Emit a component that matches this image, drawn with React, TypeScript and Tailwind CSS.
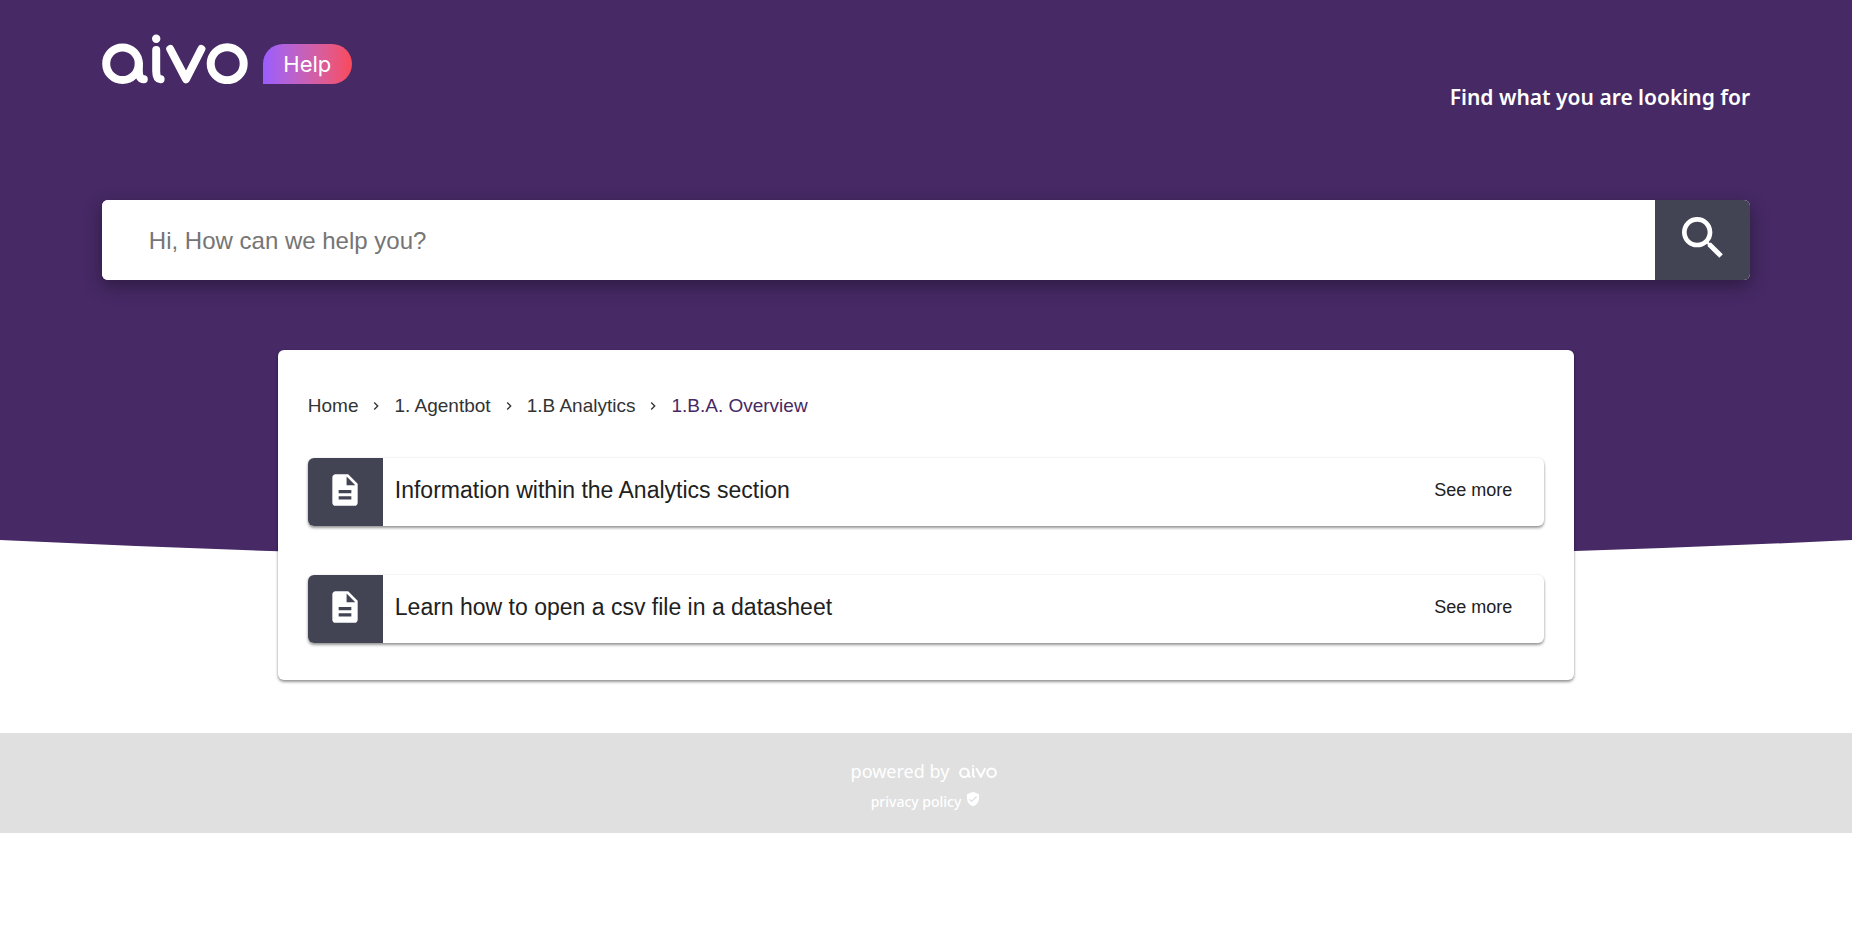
import { MdChevronRight, MdDescription, MdSearch, MdVerifiedUser } from "react-icons/md";

const crumbs = ["Home", "1. Agentbot", "1.B Analytics"];
const currentCrumb = "1.B.A. Overview";

const articles = [
  "Information within the Analytics section",
  "Learn how to open a csv file in a datasheet",
];

function AivoLogo({ className, stroke = 8 }: { className: string; stroke?: number }) {
  return (
    <svg
      viewBox="0 0 146 50"
      role="img"
      aria-label="aivo"
      className={className}
      fill="none"
      stroke="currentColor"
      strokeWidth={stroke}
      strokeLinecap="round"
      strokeLinejoin="round"
    >
      <circle cx="20.5" cy="29.7" r="16.3" />
      <path d="M36.8 29.7V36Q36.8 45 41.8 45.3" />
      <circle cx="54.2" cy="4.8" r="4.2" fill="currentColor" stroke="none" />
      <path d="M54.2 16V37Q54.2 45 58.6 45.3" />
      <path d="M68.2 15L84 45.2L99.4 15" />
      <circle cx="125.2" cy="29.7" r="16.5" />
    </svg>
  );
}

function ArticleRow({ title }: { title: string }) {
  return (
    <li>
      <a
        href="#"
        className="flex h-17 items-stretch overflow-hidden rounded-md bg-white shadow-[0_2px_3px_rgba(0,0,0,0.4),0_0_3px_rgba(0,0,0,0.08)]"
      >
        <span className="flex w-[75px] shrink-0 items-center justify-center bg-[#434453] pb-1 text-white">
          <MdDescription size={38} aria-hidden />
        </span>
        <span className="flex flex-1 items-center pb-1 pl-3 text-[23px] text-[#212121]">{title}</span>
        <span className="flex items-center pr-8 pb-1 text-[18px] text-[#212121]">See more</span>
      </a>
    </li>
  );
}

export default function App() {
  return (
    <div className="min-h-screen bg-white font-['Liberation_Sans',Arial,sans-serif]">
      <header className="h-[540px] bg-[#462965] px-[5.5%] pt-[34px] text-white">
        <div className="flex h-[166px] items-start justify-between">
          <a href="#" className="flex items-end gap-[15px]">
            <AivoLogo className="h-[50px] w-[146px]" />
            <span className="flex h-10 w-[89px] items-center justify-center rounded-[20px] rounded-bl-none bg-linear-to-r from-[#9b5cff] to-[#fa485a] font-[Inter,sans-serif] text-[22px]">
              Help
            </span>
          </a>
          <h1 className="pt-12 font-['Noto_Sans',sans-serif] text-[21px] font-semibold">
            Find what you are looking for
          </h1>
        </div>

        <form
          role="search"
          onSubmit={(e) => e.preventDefault()}
          className="flex h-20 overflow-hidden rounded-md bg-white shadow-[0_6px_18px_rgba(0,0,0,0.35)]"
        >
          <input
            type="search"
            aria-label="Search"
            placeholder="Hi, How can we help you?"
            className="min-w-0 flex-1 bg-white pt-[2px] pl-[47px] text-[24px] text-[#212121] outline-none placeholder:text-[#757575]"
          />
          <button
            type="submit"
            aria-label="Submit search"
            className="flex w-[95px] items-center justify-center bg-[#434453] pb-1 text-white"
          >
            <MdSearch size={56} aria-hidden />
          </button>
        </form>
      </header>

      {/* curved lower edge of the hero */}
      <svg
        viewBox="0 0 100 22"
        preserveAspectRatio="none"
        aria-hidden
        className="block h-[22px] w-full text-[#462965]"
      >
        <path d="M0 0Q50 44 100 0Z" fill="currentColor" />
      </svg>

      <main className="relative mx-auto -mt-[212px] w-[70%] rounded-md bg-white px-[30px] pt-11 pb-[37px] shadow-[0_2px_3px_rgba(0,0,0,0.4),0_0_3px_rgba(0,0,0,0.08)]">
        <nav aria-label="Breadcrumb">
          <ol className="flex h-6 items-center text-[19px] text-[#333333]">
            {crumbs.map((c) => (
              <li key={c} className="flex items-center">
                <a href="#">{c}</a>
                <MdChevronRight size={16} aria-hidden className="mx-[10px]" />
              </li>
            ))}
            <li aria-current="page" className="text-[#462965]">
              {currentCrumb}
            </li>
          </ol>
        </nav>

        <ul className="mt-10 flex flex-col gap-[49px]">
          {articles.map((title) => (
            <ArticleRow key={title} title={title} />
          ))}
        </ul>
      </main>

      <footer className="mt-[53px] flex h-[100px] flex-col items-center bg-[#e0e0e0] pt-6 font-['Noto_Sans',sans-serif] text-white">
        <div className="flex h-7 items-center gap-[10px] pr-1 text-[18px]">
          powered by
          <AivoLogo className="h-[13px] w-[38px]" />
        </div>
        <a href="#" className="flex h-8 items-center gap-1 text-[14px] font-medium">
          privacy policy
          <MdVerifiedUser size={16} aria-hidden className="mb-1" />
        </a>
      </footer>
    </div>
  );
}
